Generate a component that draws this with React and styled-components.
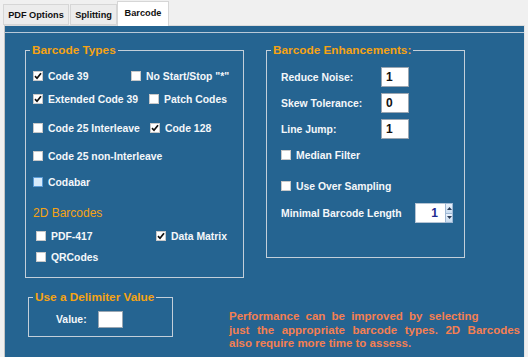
import React from "react";
import styled, { createGlobalStyle } from "styled-components";

const GlobalStyle = createGlobalStyle`
  body {
    margin: 0;
    background: #f0f0f0;
    font-family: "Liberation Sans", Arial, sans-serif;
  }
`;

const Window = styled.div`
  width: 528px;
  height: 357px;
  display: flex;
  flex-direction: column;
  overflow: hidden;
`;

const TabStrip = styled.div`
  display: flex;
  align-items: flex-end;
  height: 25px;
  padding-left: 3px;
  gap: 1px;
`;

const Tab = styled.div`
  position: relative;
  z-index: 1;
  box-sizing: border-box;
  width: ${(p) => p.$width}px;
  height: ${(p) => (p.$active ? 25 : 21)}px;
  margin-bottom: ${(p) => (p.$active ? -1 : 0)}px;
  margin-left: ${(p) => (p.$active ? -1 : 0)}px;
  display: flex;
  align-items: center;
  justify-content: center;
  padding-bottom: ${(p) => (p.$active ? 3 : 0)}px;
  background: ${(p) => (p.$active ? "#ffffff" : "#ececec")};
  border: 1px solid #d6d6d6;
  border-bottom: ${(p) => (p.$active ? "none" : "1px solid #d6d6d6")};
  font-size: 9.2px;
  font-weight: bold;
  color: #111;
`;

const Page = styled.div`
  flex: 1;
  margin-left: 4px;
  width: 519px;
  padding-top: 6px;
  background: #256491;
  border-top: 1px solid #dcdcdc;
  border-left: 1px solid #c4c4c4;
  border-right: 1px solid #e4e4e4;
`;

const Frame = styled.div`
  border-top: 1px solid #b9c9d8;
  padding: 10px 0 0 20px;
`;

const TopRow = styled.div`
  display: flex;
  align-items: flex-start;
  gap: 22px;
`;

const Group = styled.fieldset`
  box-sizing: border-box;
  margin: 0;
  padding: 0;
  min-width: 0;
  width: ${(p) => p.$width}px;
  height: ${(p) => p.$height}px;
  border: 1px solid #c3cfda;
`;

const Legend = styled.legend`
  margin-left: 4px;
  padding: 0 2px;
  color: #f5a313;
  font-size: 11.8px;
  font-weight: bold;
  line-height: 14px;
`;

const Body = styled.div`
  padding-left: ${(p) => p.$left}px;
`;

const Row = styled.div`
  display: flex;
  align-items: center;
  height: ${(p) => p.$height || 14}px;
  margin-top: ${(p) => p.$top}px;
  padding-left: ${(p) => p.$indent || 0}px;
`;

const Cell = styled.div`
  width: ${(p) => p.$width}px;
  flex: none;
  display: flex;
  align-items: center;
`;

const CheckLabel = styled.label`
  display: flex;
  align-items: center;
  gap: 5px;
  color: #f4f7fa;
  font-size: 10.4px;
  font-weight: bold;
  white-space: nowrap;
`;

const Box = styled.span`
  box-sizing: border-box;
  width: 10px;
  height: 10px;
  display: flex;
  align-items: center;
  justify-content: center;
  background: ${(p) => (p.$hover ? "#d7ebfb" : "#ffffff")};
  border: 1px solid ${(p) => (p.$hover ? "#5b9bd5" : "#c8c8c8")};
`;

const SubTitle = styled.div`
  color: #f5a313;
  font-size: 12px;
  line-height: 14px;
`;

const FieldLabel = styled.span`
  width: ${(p) => p.$width}px;
  flex: none;
  color: #f4f7fa;
  font-size: 10.4px;
  font-weight: bold;
  white-space: nowrap;
`;

const Input = styled.div`
  box-sizing: border-box;
  width: ${(p) => p.$width}px;
  height: ${(p) => p.$height}px;
  padding-left: 4px;
  display: flex;
  align-items: center;
  background: #ffffff;
  border: 1px solid #9aa6b2;
  font-size: 12px;
  font-weight: bold;
  color: #111;
`;

const Spin = styled.div`
  display: flex;
  height: 20px;
`;

const SpinValue = styled.div`
  box-sizing: border-box;
  width: 30px;
  height: 20px;
  padding-right: 7px;
  display: flex;
  align-items: center;
  justify-content: flex-end;
  background: #ffffff;
  border: 1px solid #b5c4d4;
  border-right: none;
  font-size: 12px;
  font-weight: bold;
  color: #1d2a8f;
`;

const SpinButtons = styled.div`
  display: flex;
  flex-direction: column;
  width: 8px;
`;

const SpinButton = styled.div`
  flex: 1;
  display: flex;
  align-items: center;
  justify-content: center;
  background: linear-gradient(#eaf2fb, #c9dcf0);
  border: 1px solid #9fb8d4;
  margin-top: ${(p) => (p.$down ? -1 : 0)}px;
`;

const BottomRow = styled.div`
  display: flex;
  align-items: flex-start;
  margin-top: 12px;
  padding-left: 3px;
`;

const Note = styled.div`
  margin-left: 56px;
  margin-top: 20px;
  width: 291px;
  color: #f47f52;
  font-size: 11.5px;
  font-weight: bold;
  line-height: 13.5px;
`;

const NoteLine = styled.div`
  white-space: pre;
  word-spacing: ${(p) => p.$spacing || 0}px;
  text-align: ${(p) => (p.$justify ? "justify" : "left")};
  text-align-last: ${(p) => (p.$justify ? "justify" : "auto")};
  ${(p) => p.$justify && "white-space: normal;"}
`;

function Tick() {
  return (
    <svg width="8" height="8" viewBox="0 0 8 8">
      <path d="M1 4.2 L3 6.3 L7 1.2" fill="none" stroke="#111" strokeWidth="1.7" />
    </svg>
  );
}

function Check({ label, checked, hover }) {
  return (
    <CheckLabel>
      <Box $hover={hover}>{checked && <Tick />}</Box>
      {label}
    </CheckLabel>
  );
}

function Arrow({ down }) {
  return (
    <svg width="5" height="3" viewBox="0 0 5 3">
      <path d={down ? "M0 0 H5 L2.5 3 Z" : "M0 3 H5 L2.5 0 Z"} fill="#2c3e5a" />
    </svg>
  );
}

export default function App() {
  return (
    <>
      <GlobalStyle />
      <Window>
        <TabStrip>
          <Tab $width={66}>PDF Options</Tab>
          <Tab $width={47}>Splitting</Tab>
          <Tab $width={52} $active>
            Barcode
          </Tab>
        </TabStrip>
        <Page>
          <Frame>
            <TopRow>
              <Group $width={219} $height={235}>
                <Legend>Barcode Types</Legend>
                <Body $left={7}>
                  <Row $top={12}>
                    <Cell $width={98}>
                      <Check label="Code 39" checked />
                    </Cell>
                    <Check label={'No Start/Stop "*"'} />
                  </Row>
                  <Row $top={9}>
                    <Cell $width={116}>
                      <Check label="Extended Code 39" checked />
                    </Cell>
                    <Check label="Patch Codes" />
                  </Row>
                  <Row $top={15}>
                    <Cell $width={117}>
                      <Check label="Code 25 Interleave" />
                    </Cell>
                    <Check label="Code 128" checked />
                  </Row>
                  <Row $top={14}>
                    <Check label="Code 25 non-Interleave" />
                  </Row>
                  <Row $top={12}>
                    <Check label="Codabar" hover />
                  </Row>
                  <Row $top={17} $indent={-2}>
                    <SubTitle>2D Barcodes</SubTitle>
                  </Row>
                  <Row $top={9} $indent={3}>
                    <Cell $width={120}>
                      <Check label="PDF-417" />
                    </Cell>
                    <Check label="Data Matrix" checked />
                  </Row>
                  <Row $top={7} $indent={3}>
                    <Check label="QRCodes" />
                  </Row>
                </Body>
              </Group>
              <Group $width={199} $height={215}>
                <Legend>Barcode Enhancements:</Legend>
                <Body $left={14}>
                  <Row $top={10} $height={20}>
                    <FieldLabel $width={100}>Reduce Noise:</FieldLabel>
                    <Input $width={28} $height={20}>1</Input>
                  </Row>
                  <Row $top={6} $height={20}>
                    <FieldLabel $width={100}>Skew Tolerance:</FieldLabel>
                    <Input $width={28} $height={20}>0</Input>
                  </Row>
                  <Row $top={6} $height={20}>
                    <FieldLabel $width={100}>Line Jump:</FieldLabel>
                    <Input $width={28} $height={20}>1</Input>
                  </Row>
                  <Row $top={9}>
                    <Check label="Median Filter" />
                  </Row>
                  <Row $top={17}>
                    <Check label="Use Over Sampling" />
                  </Row>
                  <Row $top={10} $height={20}>
                    <FieldLabel $width={134}>Minimal Barcode Length</FieldLabel>
                    <Spin>
                      <SpinValue>1</SpinValue>
                      <SpinButtons>
                        <SpinButton>
                          <Arrow />
                        </SpinButton>
                        <SpinButton $down>
                          <Arrow down />
                        </SpinButton>
                      </SpinButtons>
                    </Spin>
                  </Row>
                </Body>
              </Group>
            </TopRow>
            <BottomRow>
              <Group $width={145} $height={47}>
                <Legend>Use a Delimiter Value</Legend>
                <Body $left={27}>
                  <Row $top={7} $height={17}>
                    <FieldLabel $width={42}>Value:</FieldLabel>
                    <Input $width={25} $height={17} />
                  </Row>
                </Body>
              </Group>
              <Note>
                <NoteLine $spacing={3}>Performance can be improved by selecting</NoteLine>
                <NoteLine $justify>just  the appropriate barcode types.  2D Barcodes</NoteLine>
                <NoteLine>also require more time to assess.</NoteLine>
              </Note>
            </BottomRow>
          </Frame>
        </Page>
      </Window>
    </>
  );
}
